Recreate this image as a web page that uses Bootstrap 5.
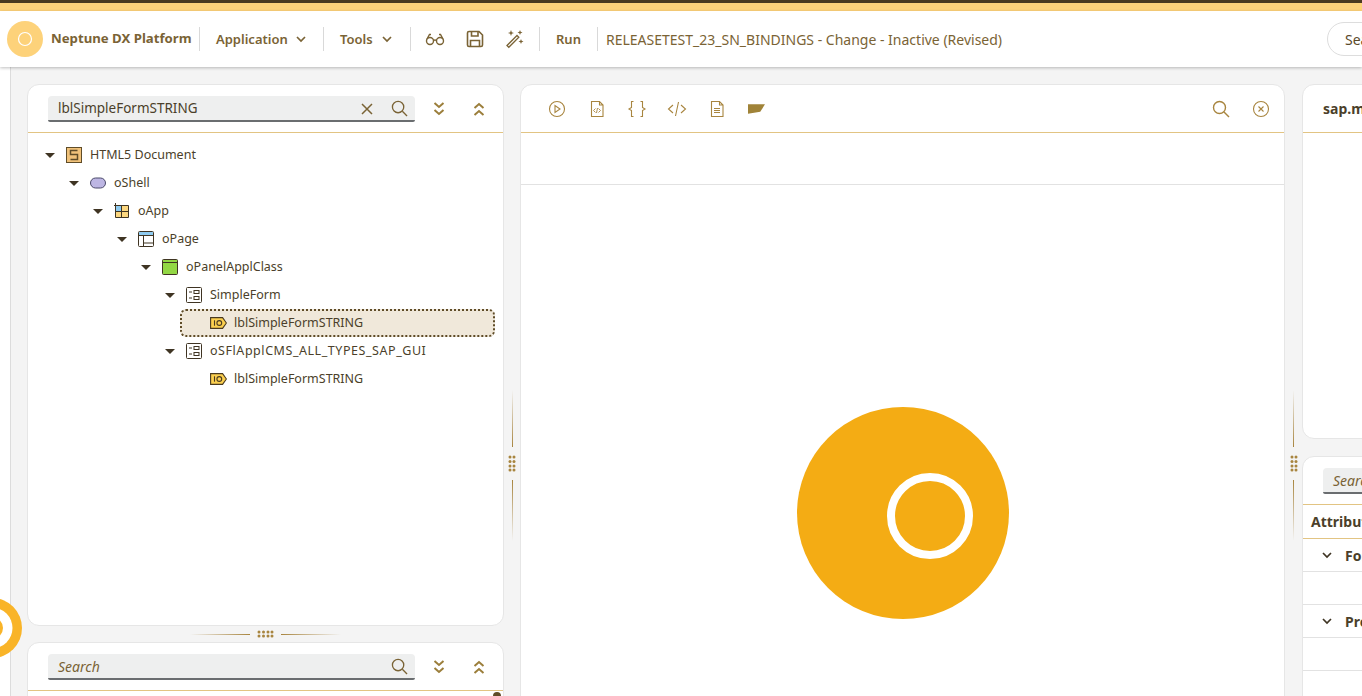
<!DOCTYPE html>
<html lang="en">
<head>
    <meta charset="UTF-8">
    <meta name="viewport" content="width=device-width, initial-scale=1.0">
    <title>Neptune DX Platform</title>
    <link href="https://cdn.jsdelivr.net/npm/bootstrap@5.3.0/dist/css/bootstrap.min.css" rel="stylesheet">
    <style>
        html, body { height: 696px; overflow: hidden; }
        body { background: #f4f4f4; font-family: "Noto Sans", "Liberation Sans", sans-serif; color: #4b3f2a; position: relative; }

        /* top strips and header */
        .strip-dark { height: 3px; background: #4a3a20; }
        .strip-gold { height: 8px; background: #fdd27a; }
        .app-head { height: 56px; background: #fff; box-shadow: 0 1px 3px rgba(0,0,0,.25); padding: 0; position: relative; z-index: 2; flex-wrap: nowrap; justify-content: flex-start; overflow: hidden; }
        .head-logo { width: 36px; height: 36px; margin-left: 7px; margin-right: 8px; flex: none; }
        .brand-name { font-size: 13.2px; font-weight: 700; color: #7a6335; width: 148px; flex: none; white-space: nowrap; }
        .head-sep { width: 1px; height: 24px; background: #d9d9d9; flex: none; }
        .head-btn { font-size: 13px; font-weight: 600; color: #7a6335; padding: 1px 0 0; border: 0; display: flex; align-items: center; white-space: nowrap; flex: none; }
        .head-btn:hover { color: #7a6335; }
        .btn-app { width: 123px; padding-left: 16px; gap: 8px; }
        .btn-tools { width: 86px; padding-left: 16px; gap: 9px; }
        .head-icons { width: 128px; padding-left: 14px; gap: 20px; flex: none; }
        .btn-run { width: 57px; padding-left: 16px; }
        .doc-title { font-size: 14px; color: #7a6335; padding-left: 8px; white-space: nowrap; width: 729px; flex: none; }
        .head-search { width: 140px; height: 34px; border: 1px solid #ddd; border-radius: 17px; font-size: 14px; color: #5b4a2a; padding: 0 17px; flex: none; display: flex; align-items: center; }

        /* workspace */
        .work-area { height: 629px; }
        .left-rail { width: 11px; background: #fff; border-right: 1px solid #dcdcdc; flex: none; }
        .col-left { width: 477px; margin-left: 16px; padding-top: 17px; flex: none; }
        .col-mid { width: 765px; padding-top: 17px; flex: none; }
        .col-right { width: 400px; padding-top: 17px; flex: none; }
        .pane { background: #fff; border: 1px solid #e6e6e6; border-radius: 12px; overflow: hidden; }
        .pane-tree { height: 542px; }
        .pane-low { height: 120px; }
        .pane-mid { height: 700px; }
        .pane-sap { height: 355px; margin-bottom: 17px; }
        .pane-attr { height: 400px; }
        .pane-bar { height: 48px; border-bottom: 1px solid #e2c483; padding-left: 20px; padding-right: 0; }

        .find-box { width: 367px; height: 26px; background: #eeefef; border-bottom: 2px solid #6a6d70; border-radius: 4px 4px 2px 2px; padding: 2px 7px 0 10px; font-size: 13.5px; color: #4b3f2a; flex: none; }
        .find-box em { color: #7a6335; font-size: 14px; }
        .find-icons { gap: 18px; }
        .bar-double { width: 72px; margin-left: 8px; flex: none; }
        .bar-double svg { margin: 0 10px; }

        /* tree */
        .tree-list { margin: 8px 0 0; padding: 0; list-style: none; font-size: 12.5px; }
        .tree-row { height: 28px; position: relative; white-space: nowrap; }
        .tree-row svg.item-ico { margin-right: 8px; flex: none; }
        .tree-row svg.label-ico { margin-right: 7px; flex: none; }
        .tree-arrow { width: 0; height: 0; border-left: 5px solid transparent; border-right: 5px solid transparent; border-top: 5px solid #3f3423; margin-right: 11px; flex: none; }
        .tree-noarrow { width: 21px; flex: none; }
        .wide-label { letter-spacing: .55px; }
        .lvl-0 { padding-left: 17px; }
        .lvl-1 { padding-left: 41px; }
        .lvl-2 { padding-left: 65px; }
        .lvl-3 { padding-left: 89px; }
        .lvl-4 { padding-left: 113px; }
        .lvl-5 { padding-left: 137px; }
        .lvl-6 { padding-left: 161px; }
        .row-picked::before { content: ""; position: absolute; left: 152px; right: 8px; top: 0; bottom: 0; background: #f0e8da; border: 2px dotted #5f4c28; border-radius: 6px; }
        .row-picked > * { position: relative; }

        /* splitters */
        .split-v { width: 16px; flex: none; }
        .split-right { width: 17px; }
        .split-v i { display: block; width: 1px; }
        .line-up { height: 57px; margin-top: 323px; background: linear-gradient(to bottom, rgba(160,120,50,0), #a8853f); }
        .line-down { height: 61px; background: linear-gradient(to top, rgba(160,120,50,0), #a8853f); }
        .split-dots { margin: 8px 0; flex: none; }
        .split-h { height: 16px; gap: 7px; }
        .split-h i { display: block; height: 1px; width: 60px; }
        .line-left { background: linear-gradient(to right, rgba(160,120,50,0), #a8853f); }
        .line-right { background: linear-gradient(to left, rgba(160,120,50,0), #a8853f); }

        /* middle pane */
        .mid-tools { gap: 20px; padding-left: 6px; }
        .mid-flag { margin-left: 1px; }
        .mid-right { gap: 22px; padding-right: 14px; }
        .mid-sub { height: 52px; border-bottom: 1px solid #e2e2e2; }
        .busy-wrap { padding-top: 222px; }

        /* right pane */
        .sap-title { font-size: 14px; font-weight: 700; white-space: nowrap; }
        .attr-search { height: 48px; border-bottom: 1px solid #e2c483; padding-left: 20px; }
        .attr-search .find-box { width: 200px; }
        .attr-head { height: 34px; border-bottom: 1px solid #e2c483; padding-left: 8px; font-size: 14px; font-weight: 700; }
        .attr-group { height: 33px; border-bottom: 1px solid #e2e2e2; padding-left: 19px; font-size: 14px; font-weight: 700; gap: 13px; }
        .attr-blank { height: 33px; border-bottom: 1px solid #e2e2e2; }

        .busy-side { position: absolute; left: -38px; top: 598px; z-index: 3; }
        .low-dot { position: absolute; right: 2px; top: 49px; width: 8px; height: 8px; border-radius: 50%; background: #5f4c28; }
    </style>
</head>

<body>
    <svg width="0" height="0" class="position-absolute">
        <defs>
            <symbol id="i-search" viewBox="0 0 18 18"><circle cx="7.5" cy="7.5" r="6" fill="none" stroke="currentColor" stroke-width="1.4"/><path d="M12 12l5 5" stroke="currentColor" stroke-width="1.4"/></symbol>
            <symbol id="i-down" viewBox="0 0 12 16"><path d="M1.500 2l4.500 4 4.500-4M1.500 9l4.500 4 4.500-4" fill="none" stroke="currentColor" stroke-width="2"/></symbol>
            <symbol id="i-up" viewBox="0 0 12 16"><path d="M1.500 7l4.500-4 4.500 4M1.500 14l4.500-4 4.500 4" fill="none" stroke="currentColor" stroke-width="2"/></symbol>
            <symbol id="i-chev" viewBox="0 0 10 7"><path d="M1 1l4 4 4-4" fill="none" stroke="currentColor" stroke-width="1.700"/></symbol>
            <symbol id="i-form" viewBox="0 0 16 16"><rect x=".5" y=".5" width="15" height="15" rx="1" fill="#fff" stroke="#3f3423"/><path d="M3 5h3M3 11h3" stroke="#3f3423"/><rect x="8" y="3.500" width="5" height="3" fill="none" stroke="#3f3423"/><rect x="8" y="9.500" width="5" height="3" fill="none" stroke="#3f3423"/></symbol>
            <symbol id="i-label" viewBox="0 0 17 12"><path d="M.6.600h12l3.800 5.400-3.800 5.400H.600z" fill="#fcd04f" stroke="#4a3a20" stroke-width="1.100"/><path d="M4.500 3.300v5.400" stroke="#4a3a20" stroke-width="1.100"/><circle cx="9.300" cy="6" r="2.400" fill="none" stroke="#4a3a20" stroke-width="1.100"/></symbol>
        </defs>
    </svg>

    <div class="strip-dark"></div>
    <div class="strip-gold"></div>

    <nav class="navbar app-head">
        <svg class="head-logo" viewBox="0 0 36 36"><circle cx="18" cy="18" r="18" fill="#fdd27a"/><circle cx="18" cy="18" r="6.500" fill="none" stroke="#fff" stroke-width="1.200"/></svg>
        <span class="brand-name">Neptune DX Platform</span>
        <span class="head-sep"></span>
        <button class="btn head-btn btn-app">Application <svg width="10" height="7"><use href="#i-chev"/></svg></button>
        <span class="head-sep"></span>
        <button class="btn head-btn btn-tools">Tools <svg width="10" height="7"><use href="#i-chev"/></svg></button>
        <span class="head-sep"></span>
        <div class="d-flex align-items-center head-icons">
            <svg width="20" height="20" viewBox="0 0 20 20" fill="none" stroke="#7a6335" stroke-width="1.400"><circle cx="5" cy="12" r="3.500"/><circle cx="15" cy="12" r="3.500"/><path d="M8.500 11.500q1.500-1 3 0M2 10l2.500-4.500h1.500M18 10l-2.500-4.500H14"/></svg>
            <svg width="20" height="20" viewBox="0 0 20 20" fill="none" stroke="#7a6335" stroke-width="1.600"><path d="M4 2.500h10l3.500 3.500v10a1.500 1.500 0 0 1-1.500 1.500H4A1.500 1.500 0 0 1 2.500 16V4A1.500 1.500 0 0 1 4 2.500z"/><path d="M6.500 2.500v4.500h6.500V2.500M5.500 17.500v-6h9v6"/></svg>
            <svg width="20" height="20" viewBox="0 0 20 20" fill="#7a6335"><path d="M2 16.500L12 6.500l1.800 1.800-10 10z" fill="none" stroke="#7a6335" stroke-width="1.300"/><path d="M6 1l.8 2.200L9 4l-2.200.8L6 7l-.8-2.200L3 4l2.200-.8zM15 1l.7 1.800 1.800.7-1.800.7-.7 1.800-.7-1.800-1.800-.7 1.800-.7zM16 10l.7 1.800 1.800.7-1.800.7-.7 1.800-.7-1.800-1.800-.7 1.800-.7z"/></svg>
        </div>
        <span class="head-sep"></span>
        <button class="btn head-btn btn-run">Run</button>
        <span class="head-sep"></span>
        <span class="doc-title">RELEASETEST_23_SN_BINDINGS - Change - Inactive (Revised)</span>
        <div class="head-search">Search</div>
    </nav>

    <div class="d-flex work-area">
        <div class="left-rail"></div>

        <div class="col-left">
            <div class="pane pane-tree">
                <div class="d-flex align-items-center pane-bar">
                    <div class="d-flex align-items-center justify-content-between find-box">
                        <span>lblSimpleFormSTRING</span>
                        <span class="d-flex align-items-center find-icons">
                            <svg width="12" height="12" viewBox="0 0 12 12"><path d="M1 1l10 10M11 1L1 11" stroke="#7a6335" stroke-width="1.500"/></svg>
                            <svg width="17" height="17" color="#7a6335"><use href="#i-search"/></svg>
                        </span>
                    </div>
                    <div class="d-flex align-items-center bar-double">
                        <svg width="12" height="16" color="#9c7f3c"><use href="#i-down"/></svg>
                        <svg width="12" height="16" color="#9c7f3c" class="ms-auto"><use href="#i-up"/></svg>
                    </div>
                </div>
                <ul class="tree-list">
                    <li class="d-flex align-items-center tree-row lvl-0"><span class="tree-arrow"></span>
                        <svg class="item-ico" width="16" height="16" viewBox="0 0 16 16"><rect x=".5" y=".5" width="15" height="15" fill="#f1c27a" stroke="#5f4c28"/><path d="M11.500 3.500h-7v4h7v5h-7" fill="none" stroke="#5f4c28" stroke-width="1.500"/></svg>HTML5 Document</li>
                    <li class="d-flex align-items-center tree-row lvl-1"><span class="tree-arrow"></span>
                        <svg class="item-ico" width="16" height="16" viewBox="0 0 16 16"><rect x=".5" y="3" width="15" height="10" rx="5" fill="#bdb6e3" stroke="#4b4a6a"/></svg>oShell</li>
                    <li class="d-flex align-items-center tree-row lvl-2"><span class="tree-arrow"></span>
                        <svg class="item-ico" width="16" height="16" viewBox="0 0 16 16"><rect x="1.500" y="2.500" width="6" height="6" fill="#8fcbf0"/><rect x="7.500" y="2.500" width="7" height="6" fill="#fcd77f"/><rect x="1.500" y="8.500" width="6" height="6" fill="#fcd77f"/><rect x="7.500" y="8.500" width="7" height="6" fill="#fcd77f"/><path d="M1.500 0v14.500h13v-12H0M7.500 2.500v12M1.500 8.500h13" fill="none" stroke="#3f3423"/></svg>oApp</li>
                    <li class="d-flex align-items-center tree-row lvl-3"><span class="tree-arrow"></span>
                        <svg class="item-ico" width="16" height="16" viewBox="0 0 16 16"><rect x=".5" y=".5" width="15" height="15" rx="1" fill="#fff" stroke="#3f3423"/><rect x="1" y="1" width="14" height="3" fill="#8fcbf0"/><path d="M1 4.500h14M5.500 4.500V15M5.500 12h10" fill="none" stroke="#3f3423"/></svg>oPage</li>
                    <li class="d-flex align-items-center tree-row lvl-4"><span class="tree-arrow"></span>
                        <svg class="item-ico" width="16" height="16" viewBox="0 0 16 16"><rect x=".5" y=".5" width="15" height="15" rx="1" fill="#92d744" stroke="#3f3423"/><path d="M1 3.500h14" stroke="#3f3423"/></svg>oPanelApplClass</li>
                    <li class="d-flex align-items-center tree-row lvl-5"><span class="tree-arrow"></span>
                        <svg class="item-ico" width="16" height="16"><use href="#i-form"/></svg>SimpleForm</li>
                    <li class="d-flex align-items-center tree-row lvl-6 row-picked"><span class="tree-noarrow"></span>
                        <svg class="label-ico" width="17" height="12"><use href="#i-label"/></svg><span>lblSimpleFormSTRING</span></li>
                    <li class="d-flex align-items-center tree-row lvl-5"><span class="tree-arrow"></span>
                        <svg class="item-ico" width="16" height="16"><use href="#i-form"/></svg><span class="wide-label">oSFlApplCMS_ALL_TYPES_SAP_GUI</span></li>
                    <li class="d-flex align-items-center tree-row lvl-6"><span class="tree-noarrow"></span>
                        <svg class="label-ico" width="17" height="12"><use href="#i-label"/></svg>lblSimpleFormSTRING</li>
                </ul>
            </div>

            <div class="d-flex align-items-center justify-content-center split-h">
                <i class="line-left"></i>
                <svg width="17" height="8" fill="#a8853f"><circle cx="2" cy="2" r="1.500"/><circle cx="6.500" cy="2" r="1.500"/><circle cx="11" cy="2" r="1.500"/><circle cx="15" cy="2" r="1.500"/><circle cx="2" cy="6" r="1.500"/><circle cx="6.500" cy="6" r="1.500"/><circle cx="11" cy="6" r="1.500"/><circle cx="15" cy="6" r="1.500"/></svg>
                <i class="line-right"></i>
            </div>

            <div class="pane pane-low position-relative">
                <div class="d-flex align-items-center pane-bar">
                    <div class="d-flex align-items-center justify-content-between find-box">
                        <em>Search</em>
                        <svg width="17" height="17" color="#7a6335"><use href="#i-search"/></svg>
                    </div>
                    <div class="d-flex align-items-center bar-double">
                        <svg width="12" height="16" color="#9c7f3c"><use href="#i-down"/></svg>
                        <svg width="12" height="16" color="#9c7f3c" class="ms-auto"><use href="#i-up"/></svg>
                    </div>
                </div>
                <span class="low-dot"></span>
            </div>
        </div>

        <div class="d-flex flex-column align-items-center split-v">
            <i class="line-up"></i>
            <svg class="split-dots" width="8" height="17" fill="#a8853f"><circle cx="2" cy="2" r="1.500"/><circle cx="6" cy="2" r="1.500"/><circle cx="2" cy="6.500" r="1.500"/><circle cx="6" cy="6.500" r="1.500"/><circle cx="2" cy="11" r="1.500"/><circle cx="6" cy="11" r="1.500"/><circle cx="2" cy="15" r="1.500"/><circle cx="6" cy="15" r="1.500"/></svg>
            <i class="line-down"></i>
        </div>

        <div class="col-mid">
            <div class="pane pane-mid">
                <div class="d-flex align-items-center pane-bar">
                    <div class="d-flex align-items-center mid-tools">
                        <svg width="20" height="20" viewBox="0 0 20 20" fill="none" stroke="#a8853f" stroke-width="1.100"><circle cx="10" cy="10" r="7.500"/><path d="M8 6.500v7l5-3.500z"/></svg>
                        <svg width="20" height="20" viewBox="0 0 20 20" fill="none" stroke="#a8853f" stroke-width="1.100"><path d="M4.500 2.500h8l3.500 3.500v11.500H4.500zM12.500 2.500V6H16"/><path d="M8.500 9.500L6.500 11.500l2 2M11.500 9.500l2 2-2 2M10.500 9l-1 5" stroke-width=".9"/></svg>
                        <svg width="20" height="20" viewBox="0 0 20 20" fill="none" stroke="#a8853f" stroke-width="1.100"><path d="M6.500 2.500H4.500v6L2 10l2.500 1.500v6h2M13.500 2.500h2v6L18 10l-2.500 1.500v6h-2"/></svg>
                        <svg width="20" height="20" viewBox="0 0 20 20" fill="none" stroke="#a8853f" stroke-width="1.100"><path d="M6 6l-4.500 4L6 14M14 6l4.500 4L14 14M11.500 3l-3 14"/></svg>
                        <svg width="20" height="20" viewBox="0 0 20 20" fill="none" stroke="#a8853f" stroke-width="1.100"><path d="M4.500 2.500h8l3.500 3.500v11.500H4.500zM12.500 2.500V6H16M7 9.500h6M7 11.500h6M7 13.500h6"/></svg>
                        <svg class="mid-flag" width="17" height="10" viewBox="0 0 18 10"><path d="M0 0h18l-5 8-13 2z" fill="#a08338"/></svg>
                    </div>
                    <div class="d-flex align-items-center ms-auto mid-right">
                        <svg width="18" height="18" color="#a8853f"><use href="#i-search"/></svg>
                        <svg width="18" height="18" viewBox="0 0 18 18" fill="none" stroke="#a8853f" stroke-width="1.100"><circle cx="9" cy="9" r="7.500"/><path d="M6.500 6.500l5 5M11.500 6.500l-5 5"/></svg>
                    </div>
                </div>
                <div class="mid-sub"></div>
                <div class="d-flex justify-content-center busy-wrap">
                    <svg width="212" height="212" viewBox="0 0 212 212"><circle cx="106" cy="106" r="106" fill="#f4ac14"/><circle cx="133" cy="109" r="39" fill="none" stroke="#fff" stroke-width="8"/></svg>
                </div>
            </div>
        </div>

        <div class="d-flex flex-column align-items-center split-v split-right">
            <i class="line-up"></i>
            <svg class="split-dots" width="8" height="17" fill="#a8853f"><circle cx="2" cy="2" r="1.500"/><circle cx="6" cy="2" r="1.500"/><circle cx="2" cy="6.500" r="1.500"/><circle cx="6" cy="6.500" r="1.500"/><circle cx="2" cy="11" r="1.500"/><circle cx="6" cy="11" r="1.500"/><circle cx="2" cy="15" r="1.500"/><circle cx="6" cy="15" r="1.500"/></svg>
            <i class="line-down"></i>
        </div>

        <div class="col-right">
            <div class="pane pane-sap">
                <div class="d-flex align-items-center pane-bar sap-title">sap.m.Label</div>
            </div>
            <div class="pane pane-attr">
                <div class="d-flex align-items-center attr-search">
                    <div class="d-flex align-items-center find-box"><em>Search</em></div>
                </div>
                <div class="d-flex align-items-center attr-head">Attributes</div>
                <div class="d-flex align-items-center attr-group"><svg width="10" height="7" color="#3f3423"><use href="#i-chev"/></svg>Form</div>
                <div class="attr-blank"></div>
                <div class="d-flex align-items-center attr-group"><svg width="10" height="7" color="#3f3423"><use href="#i-chev"/></svg>Properties</div>
                <div class="attr-blank"></div>
            </div>
        </div>
    </div>

    <svg class="busy-side" width="60" height="60" viewBox="0 0 60 60"><circle cx="30" cy="30" r="30" fill="#f9b428"/><circle cx="30" cy="30" r="20.500" fill="#fff"/><circle cx="30" cy="30" r="11" fill="#f9b428"/></svg>

    <script src="https://cdn.jsdelivr.net/npm/bootstrap@5.3.0/dist/js/bootstrap.bundle.min.js"></script>
</body>
</html>
